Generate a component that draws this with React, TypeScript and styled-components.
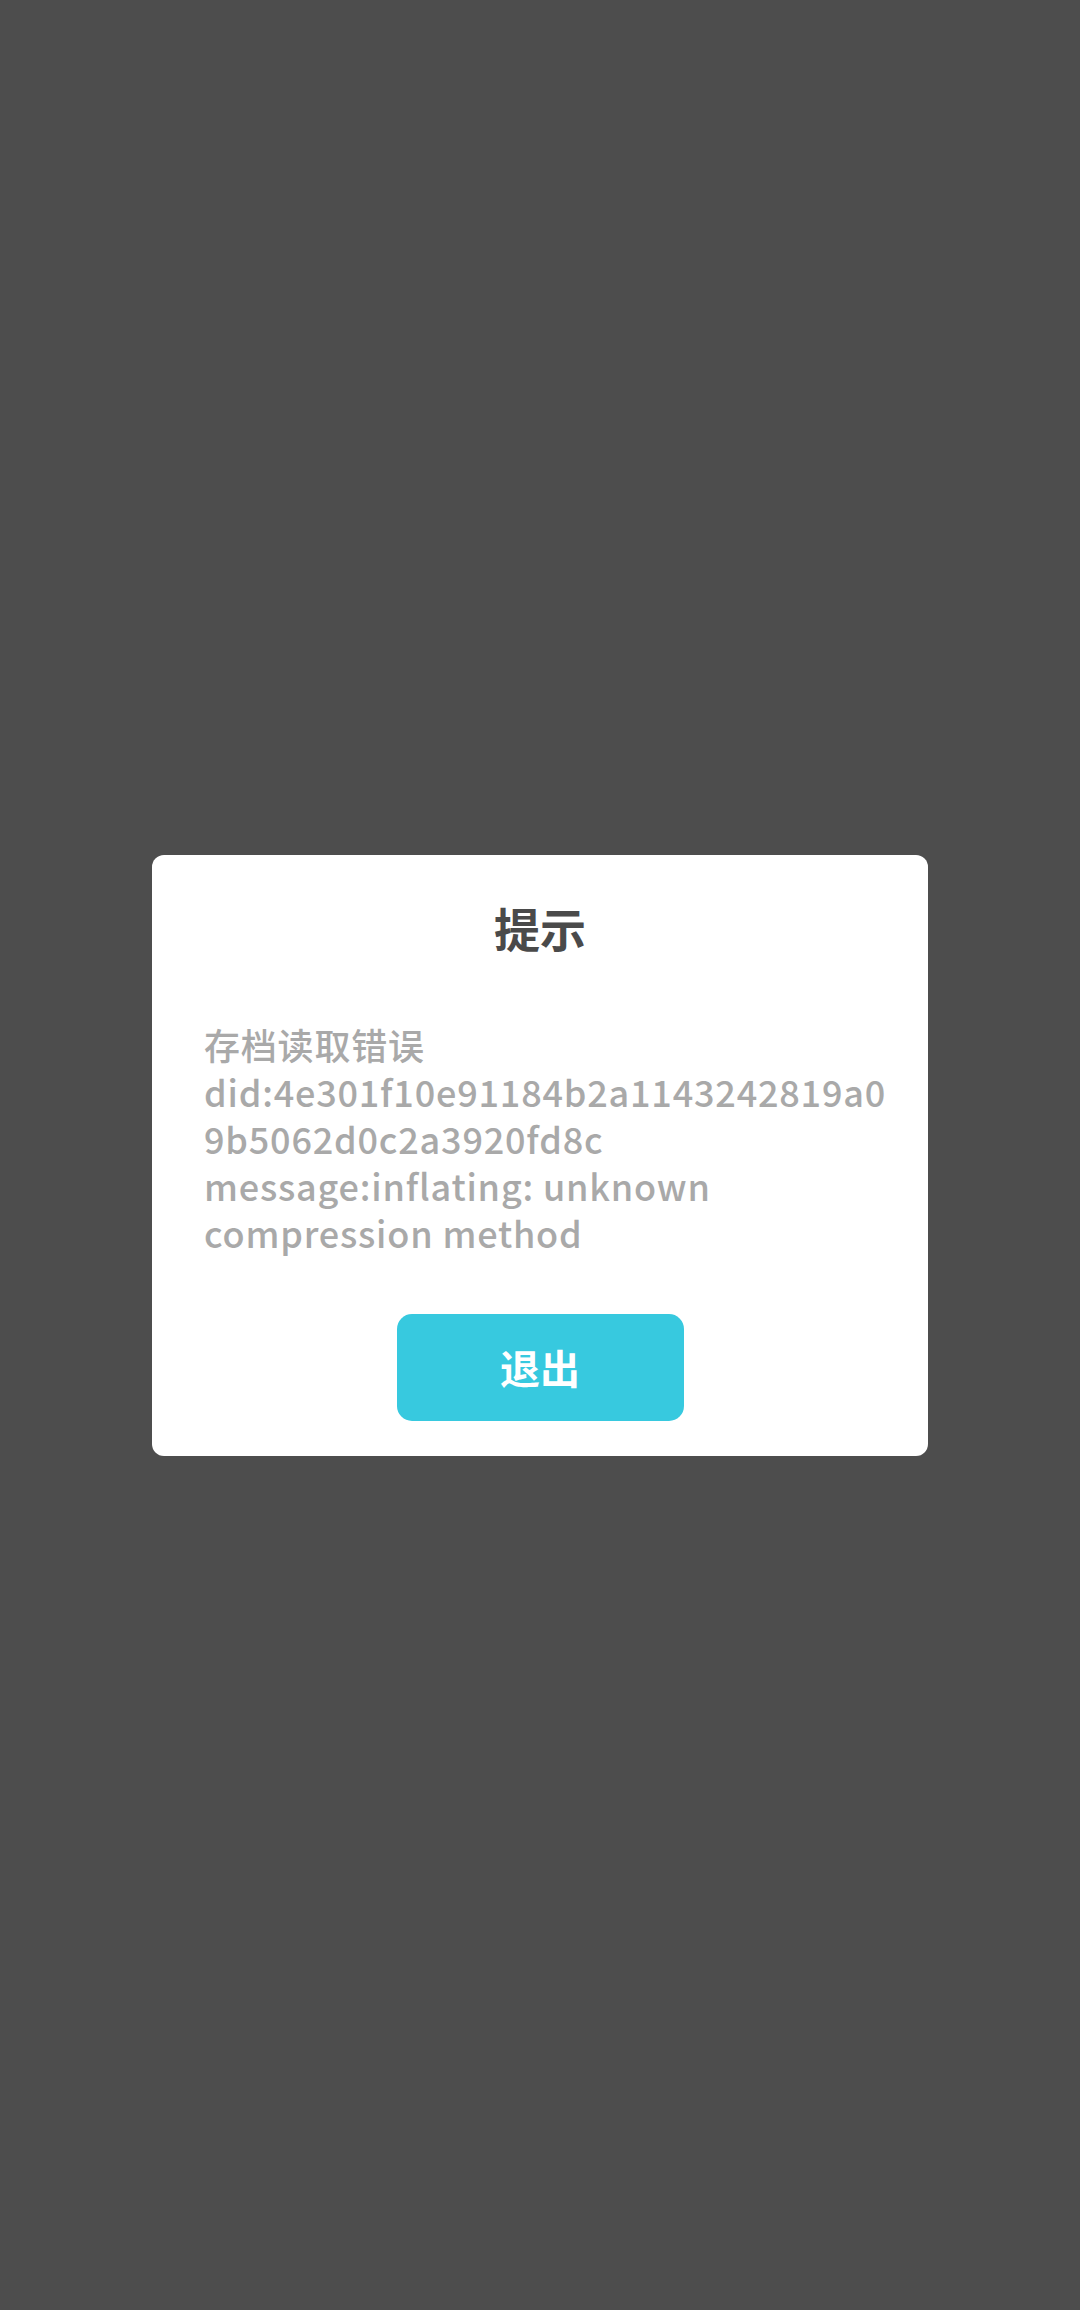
import React from "react";
import styled, { createGlobalStyle } from "styled-components";

const Global = createGlobalStyle`
  html, body {
    margin: 0;
    padding: 0;
    background: #4d4d4d;
  }
  #root {
    min-height: 100vh;
  }
`;

const Screen = styled.div`
  width: 1080px;
  height: 2310px;
  background: #4d4d4d;
  display: flex;
  align-items: center;
  justify-content: center;
  font-family: "Noto Sans CJK SC", "Noto Sans", sans-serif;
`;

const Dialog = styled.div`
  width: 776px;
  height: 601px;
  box-sizing: border-box;
  background: #ffffff;
  border-radius: 12px;
  display: flex;
  flex-direction: column;
  align-items: center;
  padding: 45px 52px 35px;
`;

const Title = styled.div`
  font-size: 46px;
  line-height: 55px;
  font-weight: 700;
  color: #4a4a4a;
`;

const Message = styled.div`
  align-self: stretch;
  margin-top: 66px;
  margin-right: -28px;
  font-size: 36px;
  line-height: 47px;
  font-weight: 500;
  letter-spacing: 0.8px;
  color: #a9a9a9;
  overflow-wrap: anywhere;
  white-space: pre-wrap;
`;

const ExitButton = styled.button`
  margin-top: auto;
  width: 287px;
  height: 107px;
  border: none;
  border-radius: 15px;
  background: #37c9df;
  color: #ffffff;
  font-family: inherit;
  font-size: 40px;
  font-weight: 700;
  display: flex;
  align-items: center;
  justify-content: center;
  padding: 0;
`;

export default function App() {
  return (
    <>
      <Global />
      <Screen>
        <Dialog>
          <Title>提示</Title>
          <Message>
            {"存档读取错误\ndid:4e301f10e91184b2a1143242819a09b5062d0c2a3920fd8c\nmessage:inflating: unknown compression method"}
          </Message>
          <ExitButton>退出</ExitButton>
        </Dialog>
      </Screen>
    </>
  );
}
